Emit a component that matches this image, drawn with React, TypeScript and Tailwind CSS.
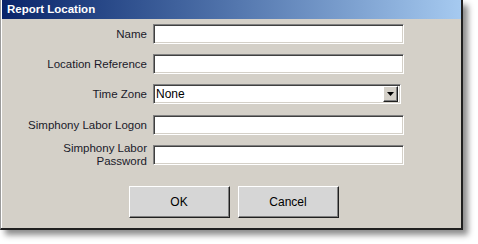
import React from 'react';

const sunken =
  'border border-t-[#808080] border-l-[#808080] border-b-white border-r-white shadow-[inset_1px_1px_0_#404040,inset_-1px_-1px_0_#d4d0c8] bg-white';

const Field: React.FC<{ label: React.ReactNode; children: React.ReactNode; className?: string }> = ({ label, children, className }) => (
  <div className={`flex items-center h-[20px] ${className || ''}`}>
    <div className="w-[145px] text-right text-[11.5px] leading-[12px] text-[#1a1a2a]">{label}</div>
    <div className="ml-[6px]">{children}</div>
  </div>
);

const Button: React.FC<{ text: string }> = ({ text }) => (
  <button className="w-[101px] h-[32px] bg-[#d6d6d6] text-[12px] text-black border border-t-white border-l-white border-b-[#202020] border-r-[#202020] shadow-[inset_-1px_-1px_0_#808080]">
    {text}
  </button>
);

const App: React.FC = () => {
  return (
    <div className="w-[478px] h-[244px] bg-white" style={{ fontFamily: '"Liberation Sans", Arial, sans-serif' }}>
      <div className="w-[463px] h-[230px] border-l border-l-[#9a9a9a] border-r-2 border-r-[#202020] border-b-2 border-b-[#202020] shadow-[5px_5px_6px_rgba(0,0,0,0.45)]">
        <div className="h-full border-l border-l-white bg-[#d4d0c8] flex flex-col">
          <div className="h-[19px] flex items-center pl-[5px] bg-gradient-to-r from-[#0a246a] to-[#a6caf0]">
            <span className="text-white font-bold text-[11.5px]">Report Location</span>
          </div>
          <div className="pt-[5px] flex flex-col">
            <Field label="Name">
              <div className={`${sunken} w-[251px] h-[20px]`} />
            </Field>
            <Field label="Location Reference" className="mt-[10px]">
              <div className={`${sunken} w-[251px] h-[20px]`} />
            </Field>
            <Field label="Time Zone" className="mt-[10px]">
              <div className={`${sunken} w-[248px] h-[20px] flex items-center`}>
                <span className="flex-1 pl-[2px] text-[12px] text-black">None</span>
                <div className="w-[15px] h-[16px] mr-[2px] bg-[#d4d0c8] border border-t-white border-l-white border-b-[#202020] border-r-[#202020] shadow-[inset_-1px_-1px_0_#808080] flex items-center justify-center">
                  <svg width="7" height="4" viewBox="0 0 7 4">
                    <path d="M0 0h7L3.5 4z" fill="#000" />
                  </svg>
                </div>
              </div>
            </Field>
            <Field label="Simphony Labor Logon" className="mt-[11px]">
              <div className={`${sunken} w-[251px] h-[20px]`} />
            </Field>
            <Field
              label={
                <span className="block leading-[13px]">
                  Simphony Labor
                  <br />
                  Password
                </span>
              }
              className="mt-[10px]"
            >
              <div className={`${sunken} w-[251px] h-[20px]`} />
            </Field>
          </div>
          <div className="mt-[21px] flex justify-center gap-[8px] pl-[4px]">
            <Button text="OK" />
            <Button text="Cancel" />
          </div>
        </div>
      </div>
    </div>
  );
};

export default App;
